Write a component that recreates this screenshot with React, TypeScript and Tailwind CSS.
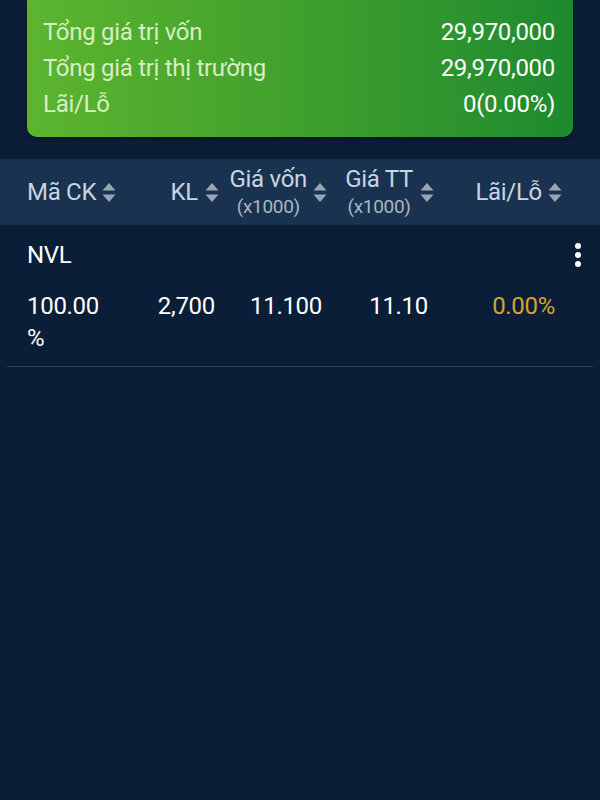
import React from "react";

const SortIcon = () => (
  <svg width="14" height="21" viewBox="0 0 14 21" className="shrink-0">
    <path d="M7 1 L13.5 8.5 L0.5 8.5 Z" fill="#9aa6b3" />
    <path d="M7 20 L13.5 12.5 L0.5 12.5 Z" fill="#9aa6b3" />
  </svg>
);

const summary = [
  { label: "Tổng giá trị vốn", value: "29,970,000" },
  { label: "Tổng giá trị thị trường", value: "29,970,000" },
  { label: "Lãi/Lỗ", value: "0(0.00%)" },
];

const App = () => {
  return (
    <main
      className="w-[600px] h-[800px] bg-[#0b1e37] overflow-hidden"
      style={{ fontFamily: "Roboto, 'Noto Sans', sans-serif" }}
    >
      <div className="px-[27px]">
        <div className="rounded-b-[10px] bg-gradient-to-r from-[#5cb52f] via-[#3fa02c] to-[#1c8a2f] pl-[16px] pr-[18px] pt-[14px] pb-[15px] shadow-[0_2px_4px_rgba(0,0,0,0.4)]">
          {summary.map((row) => (
            <div
              key={row.label}
              className="flex justify-between h-[36px] items-center text-[24px] tracking-[-0.3px]"
            >
              <span className="text-[#d6efc4]">{row.label}</span>
              <span className="text-white">{row.value}</span>
            </div>
          ))}
        </div>
      </div>

      <div className="mt-[22px] h-[66px] bg-[#19324f] flex items-center text-[24px] tracking-[-0.3px] text-[#c9d4e0]">
        <div className="w-[128px] pl-[27px] flex items-center gap-[6px]">
          <span>Mã CK</span>
          <SortIcon />
        </div>
        <div className="w-[91px] flex items-center justify-end gap-[7px]">
          <span>KL</span>
          <SortIcon />
        </div>
        <div className="w-[108px] flex items-center justify-end gap-[6px]">
          <div className="flex flex-col items-center leading-[28px] pt-[2px]">
            <span>Giá vốn</span>
            <span className="text-[19px] text-[#aab6c3]">(x1000)</span>
          </div>
          <SortIcon />
        </div>
        <div className="w-[107px] flex items-center justify-end gap-[7px]">
          <div className="flex flex-col items-center leading-[28px] pt-[2px]">
            <span>Giá TT</span>
            <span className="text-[19px] text-[#aab6c3]">(x1000)</span>
          </div>
          <SortIcon />
        </div>
        <div className="w-[128px] flex items-center justify-end gap-[6px]">
          <span>Lãi/Lỗ</span>
          <SortIcon />
        </div>
      </div>

      <div className="mx-[7px] border-b border-[#2a4160] text-white text-[24px] tracking-[-0.3px]">
        <div className="flex items-center justify-between pl-[20px] pr-[11px] pt-[14px] h-[45px]">
          <span>NVL</span>
          <svg width="8" height="26" viewBox="0 0 8 26">
            <circle cx="4" cy="4" r="3" fill="#ffffff" />
            <circle cx="4" cy="13" r="3" fill="#ffffff" />
            <circle cx="4" cy="22" r="3" fill="#ffffff" />
          </svg>
        </div>
        <div className="flex items-start pt-[20px] pb-[12px] leading-[32px]">
          <div className="w-[95px] pl-[20px]">100.00 %</div>
          <div className="w-[113px] text-right">2,700</div>
          <div className="w-[107px] text-right">11.100</div>
          <div className="w-[106px] text-right">11.10</div>
          <div className="w-[127px] text-right text-[#d6a431]">0.00%</div>
        </div>
      </div>
    </main>
  );
};

export default App;
